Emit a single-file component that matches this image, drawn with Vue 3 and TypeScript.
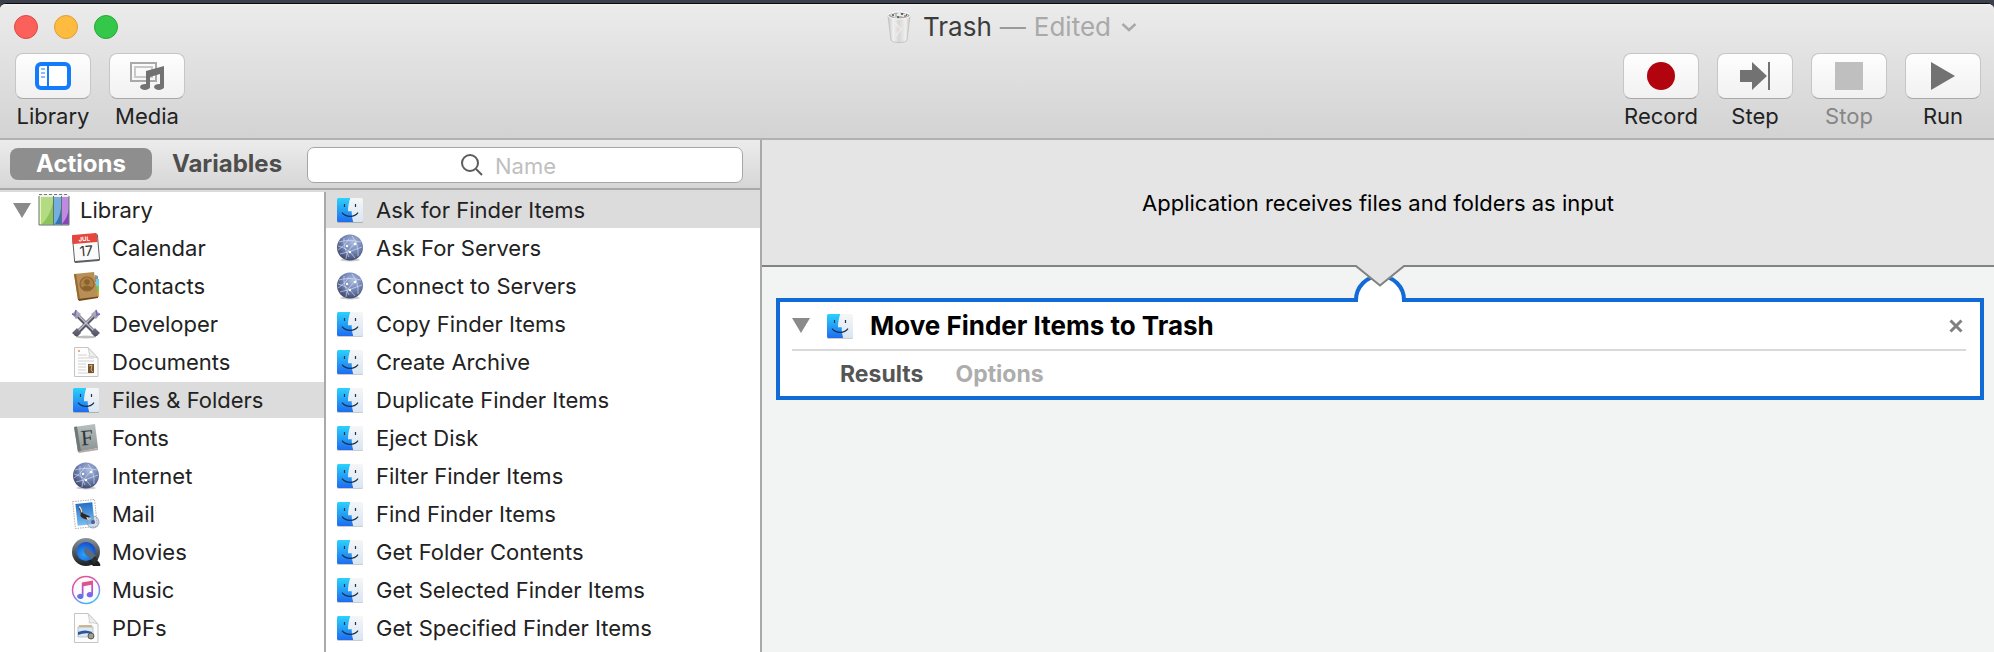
<script setup lang="ts">
import { ref } from 'vue'

interface Mark {
  text: string
  x: number
  y: number
  kind: string
}

interface Entry {
  name: string
  icon: string
  marks?: Mark[]
}

const categories: Entry[] = [
  {
    name: 'Calendar',
    icon: 'calendar',
    marks: [
      { text: 'JUL', x: 14, y: 8, kind: 'cal-month' },
      { text: '17', x: 15, y: 23, kind: 'cal-day' },
    ],
  },
  { name: 'Contacts', icon: 'contacts' },
  { name: 'Developer', icon: 'developer' },
  { name: 'Documents', icon: 'documents' },
  { name: 'Files & Folders', icon: 'finder' },
  { name: 'Fonts', icon: 'fonts', marks: [{ text: 'F', x: 16, y: 22, kind: 'font-letter' }] },
  { name: 'Internet', icon: 'globe' },
  { name: 'Mail', icon: 'mail' },
  { name: 'Movies', icon: 'movies' },
  { name: 'Music', icon: 'music' },
  { name: 'PDFs', icon: 'pdfs' },
]

const actions: Entry[] = [
  { name: 'Ask for Finder Items', icon: 'finder' },
  { name: 'Ask For Servers', icon: 'globe' },
  { name: 'Connect to Servers', icon: 'globe' },
  { name: 'Copy Finder Items', icon: 'finder' },
  { name: 'Create Archive', icon: 'finder' },
  { name: 'Duplicate Finder Items', icon: 'finder' },
  { name: 'Eject Disk', icon: 'finder' },
  { name: 'Filter Finder Items', icon: 'finder' },
  { name: 'Find Finder Items', icon: 'finder' },
  { name: 'Get Folder Contents', icon: 'finder' },
  { name: 'Get Selected Finder Items', icon: 'finder' },
  { name: 'Get Specified Finder Items', icon: 'finder' },
]

const category = ref('Files & Folders')
const action = ref('Ask for Finder Items')
const tab = ref('Actions')
const query = ref('')
</script>

<template>
  <div class="desktop">
    <svg class="sprite" aria-hidden="true">
      <defs>
        <linearGradient id="g-blue" x1="0" y1="0" x2="0" y2="1">
          <stop offset="0" stop-color="#2bd2fc" /><stop offset="1" stop-color="#1f6cf0" />
        </linearGradient>
        <linearGradient id="g-face" x1="0" y1="0" x2="0" y2="1">
          <stop offset="0" stop-color="#f6f6f7" /><stop offset="1" stop-color="#d9e6f2" />
        </linearGradient>
        <radialGradient id="g-globe" cx="0.6" cy="0.3" r="0.8">
          <stop offset="0" stop-color="#a9bbe0" /><stop offset="0.5" stop-color="#6f81b0" /><stop offset="1" stop-color="#343a5c" />
        </radialGradient>
        <linearGradient id="g-metal" x1="0" y1="0" x2="0" y2="1">
          <stop offset="0" stop-color="#b9b8ca" /><stop offset="1" stop-color="#4e4e5c" />
        </linearGradient>
        <linearGradient id="g-font" x1="0" y1="0" x2="0" y2="1">
          <stop offset="0" stop-color="#b7bfbf" /><stop offset="1" stop-color="#8b9393" />
        </linearGradient>
        <linearGradient id="g-sky" x1="0" y1="0" x2="0" y2="1">
          <stop offset="0" stop-color="#2370c8" /><stop offset="1" stop-color="#79bdf2" />
        </linearGradient>
        <linearGradient id="g-ring" x1="0" y1="0" x2="0" y2="1">
          <stop offset="0" stop-color="#8a939c" /><stop offset="1" stop-color="#1c2024" />
        </linearGradient>
        <radialGradient id="g-lens" cx="0.4" cy="0.65" r="0.7">
          <stop offset="0" stop-color="#27a8ff" /><stop offset="1" stop-color="#1545c6" />
        </radialGradient>
        <linearGradient id="g-itunes" x1="0" y1="0" x2="0.5" y2="1">
          <stop offset="0" stop-color="#f5506c" /><stop offset="0.5" stop-color="#c35bd6" /><stop offset="1" stop-color="#43b6f5" />
        </linearGradient>
        <linearGradient id="g-note" x1="0" y1="0" x2="0" y2="1">
          <stop offset="0" stop-color="#f4526b" /><stop offset="0.5" stop-color="#b354d3" /><stop offset="1" stop-color="#4a7cf4" />
        </linearGradient>
        <linearGradient id="g-can" x1="0" y1="0" x2="1" y2="0">
          <stop offset="0" stop-color="#c9c9c9" /><stop offset="0.25" stop-color="#f0f0f0" /><stop offset="0.5" stop-color="#d8d6d5" /><stop offset="0.8" stop-color="#efefef" /><stop offset="1" stop-color="#c8c8c8" />
        </linearGradient>
      </defs>

      <symbol id="i-finder" viewBox="0 0 30 30">
        <rect x="2" y="4" width="26" height="24" rx="1.5" fill="#000" opacity="0.2" />
        <rect x="2" y="3" width="26" height="24" rx="1.5" fill="url(#g-face)" />
        <path d="M3.5 3H15.3C13.8 7.5 13 12 13 16.3H16.7C16.7 20.5 17.2 24 18.2 27H3.5Q2 27 2 25.5V4.5Q2 3 3.5 3Z" fill="url(#g-blue)" />
        <path d="M9.5 9V12M20.5 9V12" stroke="#163455" stroke-width="1.2" />
        <path d="M7 17.7C11 22.6 19.5 22.6 23 17.7" fill="none" stroke="#14304f" stroke-width="1.2" />
      </symbol>

      <symbol id="i-globe" viewBox="0 0 30 30">
        <ellipse cx="15" cy="27" rx="10" ry="1.5" fill="#000" opacity="0.2" />
        <circle cx="15" cy="14.5" r="13" fill="url(#g-globe)" />
        <g fill="none" stroke="#dfe8fb" stroke-width="0.8" opacity="0.75">
          <path d="M4 9Q13 6 26 9M3 17Q10 13 14 6M3 13Q13 15 20 25M11 26Q11 17 22 9M5 21Q15 19 27 14M17 3Q24 12 23 23M9 5Q8 14 14 24" />
        </g>
        <g fill="#fff"><circle cx="12" cy="13" r="1.2" /><circle cx="20" cy="11" r="1.3" /><circle cx="15" cy="19" r="1.2" /></g>
      </symbol>

      <symbol id="i-calendar" viewBox="0 0 30 30">
        <g transform="rotate(-5 15 15)">
          <rect x="2" y="2" width="26" height="27" rx="1.5" fill="#5b6066" />
          <rect x="3" y="2" width="24" height="25" fill="#fbfbfb" />
          <rect x="2" y="1" width="25" height="9" rx="1" fill="#e5473f" />
        </g>
      </symbol>

      <symbol id="i-contacts" viewBox="0 0 30 30">
        <path d="M24 4L27 5V11H24Z" fill="#8b9096" /><path d="M25 8H28V15H25Z" fill="#6fd0e6" /><path d="M25 15H28V21H25Z" fill="#79c94f" /><path d="M25 21H28V26H25Z" fill="#f1a33a" />
        <path d="M3 3L23 1L27 26L7 29Z" fill="#b98f56" />
        <path d="M3 3L5 3L9 28.5L7 29Z" fill="#94692f" />
        <path d="M7 28L27 25.5V27L8 30Z" fill="#70491b" />
        <circle cx="16" cy="13" r="7" fill="#ae8247" stroke="#8d6531" stroke-width="1.2" />
        <circle cx="16" cy="11" r="2.8" fill="#8a622e" /><path d="M10.5 17Q16 12 21.500 17Q16 22 10.500 17Z" fill="#8a622e" />
      </symbol>

      <symbol id="i-developer" viewBox="0 0 30 30">
        <ellipse cx="15" cy="28" rx="10" ry="1.5" fill="#000" opacity="0.25" />
        <g fill="none" stroke-linecap="round">
          <path d="M5 5L25 25M25 5L5 25" stroke="#5a5968" stroke-width="4" />
          <path d="M6 5L25 24M24 5L5 24" stroke="#bebdcd" stroke-width="1.5" />
        </g>
        <path d="M1 5L5 1L10 5L5 10ZM29 5L25 1L20 5L25 10ZM1 24L6 19L10 24L6 28ZM29 24L24 19L20 24L24 28Z" fill="url(#g-metal)" />
        <path d="M1 5L4 6L5 1M29 5L26 6L25 1" fill="none" stroke="#7468ae" stroke-width="1.5" />
      </symbol>

      <symbol id="i-documents" viewBox="0 0 30 30">
        <path d="M3.5 .5H17L27 11V29.5H3.5Z" fill="#fdfdfd" stroke="#c5c5c5" />
        <path d="M17 .5Q19 8 18 10Q22 9 27 11Z" fill="#eee" stroke="#c5c5c5" stroke-width="0.8" />
        <path d="M7 3H9V5H7Z" fill="#f0a883" />
        <path d="M7 8H16M7 11H23M7 14H23M7 17H15M7 20H15M7 23H15M7 26H21" stroke="#d2d2d2" />
        <rect x="17" y="17" width="6" height="9" fill="#76542f" /><path d="M18 19L21 18L20 23L22 25" stroke="#dcae76" fill="none" />
      </symbol>

      <symbol id="i-fonts" viewBox="0 0 30 30">
        <path d="M3 4L24 1L27 25L7 29Z" fill="url(#g-font)" /><path d="M3 4L6 3.5L10 28.5L7 29Z" fill="#6f7777" /><path d="M7 28.5L27 25V27L8 30Z" fill="#b9aaa8" />
      </symbol>

      <symbol id="i-mail" viewBox="0 0 30 30">
        <g transform="rotate(-6 14 15)">
          <rect x="3" y="1.5" width="22" height="27" fill="#fff" stroke="#b0b0b0" stroke-dasharray="1.5 1" />
          <rect x="5.5" y="4" width="17" height="22" fill="url(#g-sky)" />
          <path d="M8 7Q12 8 12 14L19 18L17 21Q11 20 9 16Q11 15 8 7Z" fill="#33261f" />
          <path d="M9 7Q11 9 11 13" stroke="#e7dac6" stroke-width="1.5" fill="none" /><path d="M15 18L20 20L16 22Z" fill="#f2ead7" />
        </g>
        <circle cx="22" cy="23" r="6" fill="#8ba3c8" fill-opacity="0.35" stroke="#8796b2" stroke-width="0.8" /><circle cx="22" cy="23" r="2" fill="#4c5f88" />
      </symbol>

      <symbol id="i-movies" viewBox="0 0 30 30">
        <circle cx="15" cy="15" r="14" fill="url(#g-ring)" />
        <path d="M18 18L28 25Q30 28 29 29H22L15 22Z" fill="#1c2024" />
        <circle cx="15" cy="14.5" r="9.5" fill="url(#g-lens)" />
        <path d="M13.5 12L17 11L25 19L21 23L14 17Q12 14 13.5 12Z" fill="#5a6b7e" />
        <path d="M20 23L24 19L27 23L23 27Z" fill="#2a2f35" />
      </symbol>

      <symbol id="i-music" viewBox="0 0 30 30">
        <circle cx="15" cy="15" r="13.5" fill="#fbfafc" stroke="url(#g-itunes)" stroke-width="1.5" />
        <path d="M10.8 7.5L22 5.5V19.5A3.2 2.7 0 1 1 20.3 17.3V9.8L12.5 11.3V21.3A3.2 2.7 0 1 1 10.8 19Z" fill="url(#g-note)" />
      </symbol>

      <symbol id="i-pdfs" viewBox="0 0 30 30">
        <path d="M3.5 .5H17L27 11V29.5H3.5Z" fill="#fdfdfd" stroke="#c5c5c5" />
        <path d="M17 .5Q19 8 18 10Q22 9 27 11Z" fill="#eee" stroke="#c5c5c5" stroke-width="0.8" />
        <path d="M8 12H21V21H8Z" fill="#d5b888" /><rect x="7" y="14" width="15" height="10" fill="#dce8f4" stroke="#9aa7b5" stroke-width="0.6" />
        <path d="M7 19Q14 16 21 19V21Q14 19 7 22Z" fill="#28579c" /><circle cx="20" cy="23" r="3" fill="#a39c94" stroke="#5b5650" />
      </symbol>
    </svg>

    <div class="window">
      <header class="titlebar">
        <div class="title-row">
          <div class="lights">
            <button class="light close" aria-label="Close window"></button>
            <button class="light minimise" aria-label="Minimise window"></button>
            <button class="light zoom" aria-label="Zoom window"></button>
          </div>
          <h1 class="title">
            <svg class="trash" viewBox="0 0 24 32" aria-hidden="true">
              <path d="M1 4.5L4 29Q5 31.5 12 31.5T20 29L23 4.5Z" fill="url(#g-can)" stroke="#bdbdbd" stroke-width="0.8" />
              <ellipse cx="12" cy="4.5" rx="11" ry="3.5" fill="#a8a8a8" stroke="#fff" stroke-width="1" />
              <path d="M3 4L6 2L9 4L12 1L15 4L19 2L21 5L17 6L13 5L9 7Z" fill="#ececec" />
              <path d="M5 4H7M14 3H16M10 6H12M19 4H20" stroke="#4a4a4a" stroke-width="1.5" /><path d="M8 5H10" stroke="#7cc0b8" stroke-width="1.5" /><path d="M17 5H19" stroke="#b0715d" stroke-width="1.5" />
              <path d="M8 12L14 18L9 25" fill="none" stroke="#fff" stroke-width="2" opacity="0.35" />
            </svg>
            <span class="name">Trash</span>
            <span class="dash">—</span>
            <button class="edited">
              Edited
              <svg class="chevron" viewBox="0 0 16 10" aria-hidden="true"><path d="M1.5 2L8 8L14.5 2" fill="none" stroke="currentColor" stroke-width="2.5" /></svg>
            </button>
          </h1>
        </div>

        <div class="toolbar">
          <div class="group">
            <button class="tool">
              <span class="face">
                <svg viewBox="0 0 36 28" class="glyph wide" aria-hidden="true">
                  <rect x="2" y="2" width="32" height="24" rx="4" fill="#fff" stroke="#137cfd" stroke-width="4" />
                  <path d="M13 3V25" stroke="#137cfd" stroke-width="2" /><path d="M6 7H10M6 11H10M6 15H10" stroke="#8bbdfd" stroke-width="2" />
                </svg>
              </span>
              Library
            </button>
            <button class="tool">
              <span class="face">
                <svg viewBox="0 0 36 28" class="glyph wide" aria-hidden="true">
                  <path d="M2 1H27V19H2Z" fill="none" stroke="#a9a9a9" stroke-width="2" /><path d="M6 5H23V15H6Z" fill="none" stroke="#c9c9c9" stroke-width="2" />
                  <path d="M17 9L35 4V24.5A5 3 0 1 1 31 22V12L21 15V24.5A5 3 0 1 1 17 22Z" fill="#727272" />
                </svg>
              </span>
              Media
            </button>
          </div>
          <div class="group">
            <button class="tool">
              <span class="face"><svg viewBox="0 0 28 28" class="glyph" aria-hidden="true"><circle cx="14" cy="14" r="14" fill="#b2040e" /></svg></span>
              Record
            </button>
            <button class="tool">
              <span class="face"><svg viewBox="0 0 30 28" class="glyph step" aria-hidden="true"><path d="M0 8H12V0L27 14L12 28V20H0ZM28 0H30V28H28Z" fill="#727272" /></svg></span>
              Step
            </button>
            <button class="tool" disabled>
              <span class="face"><svg viewBox="0 0 28 28" class="glyph" aria-hidden="true"><path d="M0 0H28V28H0Z" fill="#bfbfbf" /></svg></span>
              Stop
            </button>
            <button class="tool">
              <span class="face"><svg viewBox="0 0 24 28" class="glyph run" aria-hidden="true"><path d="M0 0L24 14L0 28Z" fill="#727272" /></svg></span>
              Run
            </button>
          </div>
        </div>
      </header>

      <main class="body">
        <section class="browser">
          <div class="filter">
            <button class="tab" :class="{ on: tab === 'Actions' }" @click="tab = 'Actions'">Actions</button>
            <button class="tab" :class="{ on: tab === 'Variables' }" @click="tab = 'Variables'">Variables</button>
            <label class="search">
              <svg viewBox="0 0 22 22" aria-hidden="true"><circle cx="9" cy="9" r="8" fill="none" stroke="#5c5c5c" stroke-width="2" /><path d="M15 15L21 21" stroke="#5c5c5c" stroke-width="2" /></svg>
              <input v-model="query" type="text" placeholder="Name" aria-label="Name" />
            </label>
          </div>

          <div class="lists">
            <ul class="list categories">
              <li>
                <button class="row root" aria-expanded="true">
                  <svg class="triangle" viewBox="0 0 18 15" aria-hidden="true"><path d="M0 0H18L9 15Z" fill="#8a8a8a" /></svg>
                  <svg class="books" viewBox="0 0 32 32" aria-hidden="true">
                    <path d="M1 1H15V31H1Z" fill="#b3dc82" /><path d="M1 1H3V31H1Z" fill="#eef3b8" /><path d="M15 8V30H4Q12 22 15 8Z" fill="#8cc35c" />
                    <path d="M15 1H23V31H15Z" fill="#77aee0" /><path d="M23 14V30H17Q22 23 23 14Z" fill="#3275b4" />
                    <path d="M23 1H31V31H23Z" fill="#c08ade" /><path d="M31 14V30H24Q30 23 31 14Z" fill="#8a44ba" />
                    <path d="M1 1.5H31" stroke="#f2f2f2" stroke-width="3" /><path d="M1 .5H31" stroke="#777" stroke-dasharray="3 2" />
                    <path d="M1 2V31H31V2M15.5 2V31M23.5 2V31" fill="none" stroke="#5f7470" />
                  </svg>
                  Library
                </button>
              </li>
              <li v-for="c in categories" :key="c.name">
                <button class="row child" :class="{ selected: c.name === category }" @click="category = c.name">
                  <svg class="icon" viewBox="0 0 30 30" aria-hidden="true">
                    <use :href="'#i-' + c.icon" width="30" height="30" />
                    <g transform="rotate(-5 15 15)">
                      <text v-for="m in c.marks ?? []" :key="m.text" :x="m.x" :y="m.y" :class="m.kind" text-anchor="middle">{{ m.text }}</text>
                    </g>
                  </svg>
                  {{ c.name }}
                </button>
              </li>
            </ul>
            <ul class="list actions">
              <li v-for="a in actions" :key="a.name">
                <button class="row" :class="{ selected: a.name === action }" @click="action = a.name">
                  <svg class="icon" aria-hidden="true"><use :href="'#i-' + a.icon" /></svg>
                  {{ a.name }}
                </button>
              </li>
            </ul>
          </div>
        </section>

        <section class="workflow">
          <div class="input-note">Application receives files and folders as input</div>
          <article class="card">
            <svg class="joint" viewBox="0 0 56 40" aria-hidden="true">
              <path d="M6 38V35A22 22 0 0 1 50 35V38Z" fill="#fff" />
              <path d="M4 37V35A24 24 0 0 1 52 35V37" fill="none" stroke="#116bd6" stroke-width="4" />
              <path d="M3 0H53V2L28 21L3 2Z" fill="#e5e5e5" />
              <path d="M0 1H4L28 20.5L52 1H56" fill="none" stroke="#808380" stroke-width="2" />
            </svg>
            <div class="card-head">
              <button class="plain" aria-label="Collapse action"><svg class="triangle" viewBox="0 0 18 15" aria-hidden="true"><path d="M0 0H18L9 15Z" fill="#8a8a8a" /></svg></button>
              <svg class="icon" aria-hidden="true"><use href="#i-finder" /></svg>
              <h2>Move Finder Items to Trash</h2>
              <button class="plain" aria-label="Remove action"><svg class="cross" viewBox="0 0 14 14" aria-hidden="true"><path d="M1.5 1.5L12.5 12.5M12.5 1.5L1.5 12.5" stroke="#808080" stroke-width="3" /></svg></button>
            </div>
            <div class="card-foot">
              <button class="plain">Results</button>
              <button class="plain dim">Options</button>
            </div>
          </article>
        </section>
      </main>
    </div>
  </div>
</template>

<style>
body { background: #d5d5d5; }
</style>

<style scoped>
.desktop {
  min-height: 100vh;
  display: flex;
  flex-direction: column;
  box-sizing: border-box;
  padding-top: 3px;
  background: #3a3f4b;
  font-family: Inter, "Liberation Sans", sans-serif;
  font-size: 22px;
  color: #222;
}
.sprite { position: absolute; width: 0; height: 0; }
.cal-month { font: bold 6px Inter, sans-serif; fill: #fff; }
.cal-day { font: 14px Inter, sans-serif; fill: #333; }
.font-letter { font: 22px "Liberation Serif", serif; fill: #2f3838; }
button {
  font: inherit;
  color: inherit;
  border: 0;
  padding: 0;
  margin: 0;
  background: none;
}
svg { display: block; flex: none; }
.window {
  flex: 1;
  display: flex;
  flex-direction: column;
  border-top: 1px solid #0a0a0a;
  border-radius: 6px 6px 0 0;
  overflow: hidden;
  background: #e5e5e5;
}
.titlebar {
  height: 134px;
  border-bottom: 2px solid #b1b1b1;
  background: linear-gradient(#f4f4f4, #ebebeb 2px, #d3d3d3);
}
.title-row {
  height: 45px;
  padding: 0 14px;
  display: grid;
  grid-template-columns: 1fr auto 1fr;
  align-items: center;
}
.lights { display: flex; gap: 16px; }
.light { width: 24px; height: 24px; border-radius: 50%; border: 1px solid #df4744; background: #fc605b; }
.minimise { border-color: #de9f34; background: #fdbc40; }
.zoom { border-color: #27a833; background: #34c84a; }
.title {
  margin: 0;
  padding-left: 30px;
  display: flex;
  align-items: center;
  gap: 8px;
  font-size: 26px;
  font-weight: 400;
  line-height: 32px;
  color: #3c3c3c;
}
.trash { width: 24px; height: 32px; margin-right: 4px; }
.dash { color: #9a9a9a; }
.edited { display: flex; align-items: center; gap: 10px; color: #a9a9a9; }
.chevron { width: 16px; height: 10px; }
.toolbar { display: flex; justify-content: space-between; padding: 4px 13px 0 15px; }
.group { display: flex; gap: 18px; }
.tool {
  width: 76px;
  display: flex;
  flex-direction: column;
  align-items: center;
  gap: 3px;
  line-height: 28px;
  white-space: nowrap;
}
.tool:disabled { color: #868686; }
.face {
  width: 100%;
  height: 46px;
  box-sizing: border-box;
  display: flex;
  align-items: center;
  justify-content: center;
  border: 1px solid #c6c6c6;
  border-bottom-color: #a8a8a8;
  border-radius: 8px;
  background: linear-gradient(#fefefe, #f1f1f1);
}
.glyph { width: 28px; height: 28px; }
.wide { width: 36px; }
.step { width: 30px; }
.run { width: 24px; }
.body { flex: 1; display: flex; }
.browser {
  flex: 0 0 760px;
  display: flex;
  flex-direction: column;
  border-right: 2px solid #a9a9a9;
}
.filter {
  height: 46px;
  display: flex;
  align-items: center;
  padding: 2px 17px 0 10px;
  border-bottom: 2px solid #a9a9a9;
  background: linear-gradient(#ececec, #d6d6d6);
}
.tab {
  width: 142px;
  height: 32px;
  margin-bottom: 2px;
  border-radius: 8px;
  font-size: 24px;
  font-weight: 700;
  line-height: 32px;
  color: #4d4d4d;
}
.tab.on { background: #8e8e8e; color: #fff; }
.tab + .tab { margin-left: 4px; }
.search {
  flex: 1;
  height: 36px;
  box-sizing: border-box;
  display: flex;
  align-items: center;
  justify-content: center;
  gap: 12px;
  margin-left: 9px;
  border: 1px solid #a6a6a6;
  border-radius: 7px;
  background: #fff;
}
.search svg { width: 22px; height: 22px; }
.search input {
  width: 94px;
  padding: 2px 0 0;
  border: 0;
  outline: 0;
  background: none;
  font: inherit;
}
.search input::placeholder { color: #bfbfbf; opacity: 1; }
.lists { flex: 1; display: flex; border-top: 2px solid #dbdbdb; background: #fff; }
.list {
  list-style: none;
  margin: 0;
  padding: 0;
  display: flex;
  flex-direction: column;
  gap: 2px;
}
.categories { flex: 0 0 324px; border-right: 2px solid #a9a9a9; }
.actions { flex: 1; }
.row {
  width: 100%;
  height: 36px;
  display: flex;
  align-items: center;
  gap: 11px;
  padding-left: 9px;
  text-align: left;
  white-space: nowrap;
}
.root { padding-left: 13px; gap: 10px; }
.root .books { margin-left: -3px; }
.child { padding-left: 71px; }
.selected { background: #dcdcdc; }
.icon { width: 30px; height: 30px; }
.triangle { width: 18px; height: 15px; }
.books { width: 32px; height: 32px; }
.workflow { flex: 1; min-width: 0; background: #f2f4f4; }
.input-note {
  height: 125px;
  display: flex;
  align-items: center;
  justify-content: center;
  border-bottom: 2px solid #808380;
  background: #e5e5e5;
  color: #000;
}
.card {
  position: relative;
  margin: 31px 10px 0 14px;
  padding: 0 14px 0 12px;
  border: 4px solid #116bd6;
  background: #fff;
}
.joint {
  position: absolute;
  left: 50%;
  bottom: 100%;
  margin: 0 0 -3px -28px;
  width: 56px;
  height: 40px;
}
.card-head {
  height: 47px;
  display: flex;
  align-items: center;
  gap: 15px;
  border-bottom: 2px solid #d9d9d9;
}
.card-head h2 { flex: 1; margin: 0; font-size: 26px; line-height: 32px; font-weight: 700; color: #000; }
.cross { width: 14px; height: 14px; margin-right: 3px; }
.card-foot {
  height: 45px;
  display: flex;
  align-items: center;
  gap: 32px;
  padding-left: 48px;
  font-size: 23px;
  font-weight: 700;
  color: #555;
}
.dim { color: #adadad; }
</style>
